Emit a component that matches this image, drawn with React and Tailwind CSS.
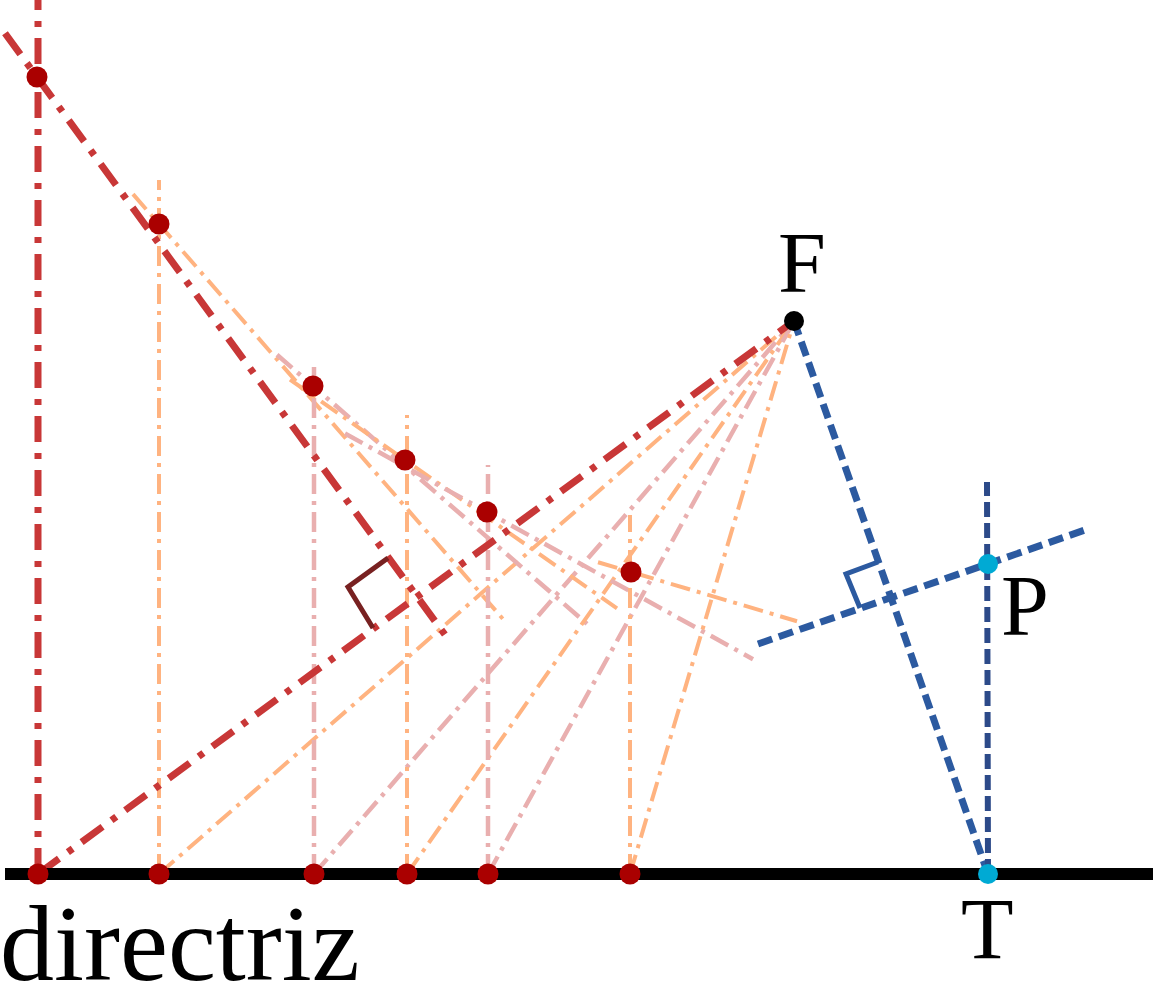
const F = { x: 794, y: 321 };
const DIR_Y = 874;

const RED = "#c83737";
const ORANGE = "#ffb380";
const PINK = "#e9afaf";
const BLUE = "#2c5aa0";

// points on the parabola, their foot on the directrix and how far each tangent is drawn
const points = [
  { x: 37, y: 77, dx: 38, top: 0, color: RED, w: 7, dash: "26 11 6 11", from: 5, to: 445 },
  { x: 159, y: 224, dx: 159, top: 180, color: ORANGE, w: 4, dash: "20 7 4 7", from: 133, to: 505 },
  { x: 313, y: 386, dx: 314, top: 367, color: PINK, w: 4.5, dash: "20 7 4 7", from: 277, to: 587 },
  { x: 405, y: 460, dx: 407, top: 415, color: ORANGE, w: 4, dash: "20 7 4 7", from: 290, to: 617 },
  { x: 487, y: 512, dx: 488, top: 465, color: PINK, w: 4.5, dash: "20 7 4 7", from: 345, to: 753 },
  { x: 631, y: 572, dx: 630, top: 515, color: ORANGE, w: 4, dash: "20 7 4 7", from: 598, to: 797 },
];

function tangentY(p, x) {
  const slope = (F.x - p.dx) / (DIR_Y - F.y);
  return p.y + slope * (x - p.x);
}

function Construction({ p }) {
  return (
    <g stroke={p.color} strokeWidth={p.w} strokeDasharray={p.dash} fill="none">
      <line x1={p.dx} y1={DIR_Y} x2={p.dx} y2={p.top} />
      <line x1={p.dx} y1={DIR_Y} x2={F.x} y2={F.y} />
      <line x1={p.from} y1={tangentY(p, p.from)} x2={p.to} y2={tangentY(p, p.to)} />
    </g>
  );
}

function Diagram() {
  const light = points.slice(1);
  return (
    <svg width="1153" height="983" viewBox="0 0 1153 983" className="block">
      {light.map((p) => (
        <Construction key={p.x} p={p} />
      ))}
      <Construction p={points[0]} />
      <polyline points="388,558 348,587 373,628" fill="none" stroke="#782121" strokeWidth="5" />

      {/* blue construction for T and P */}
      <g fill="none" strokeWidth="7">
        <line x1={F.x} y1={F.y} x2="988" y2={DIR_Y} stroke={BLUE} strokeDasharray="15 7" />
        <line x1="758" y1="644" x2="1085" y2="530" stroke={BLUE} strokeDasharray="15 7" />
        <line x1="988" y1={DIR_Y} x2="987" y2="482" stroke="#2c4a89" strokeWidth="6" strokeDasharray="15 6" />
        <polyline points="878,562 846,574 860,608" stroke={BLUE} strokeWidth="5" />
      </g>

      <line x1="5" y1={DIR_Y} x2="1153" y2={DIR_Y} stroke="#000" strokeWidth="12" />

      {points.map((p) => (
        <g key={"d" + p.x} fill="#aa0000">
          <circle cx={p.x} cy={p.y} r="10.5" />
          <circle cx={p.dx} cy={DIR_Y} r="10.5" />
        </g>
      ))}
      <circle cx={F.x} cy={F.y} r="10" fill="#000" />
      <circle cx="988" cy="564" r="10" fill="#00aad4" />
      <circle cx="988" cy={DIR_Y} r="10" fill="#00aad4" />
    </svg>
  );
}

export default function App() {
  return (
    <div className="relative w-[1153px] h-[983px] overflow-hidden bg-white font-['Liberation_Serif',serif] text-black leading-[0.7]">
      <Diagram />
      <span className="absolute left-[778px] top-[233px] text-[86px]">F</span>
      <span className="absolute left-[1001px] top-[576px] text-[86px]">P</span>
      <span className="absolute left-[961px] top-[899px] text-[86px]">T</span>
      <span className="absolute left-0 top-[906px] text-[108px]">directriz</span>
    </div>
  );
}
